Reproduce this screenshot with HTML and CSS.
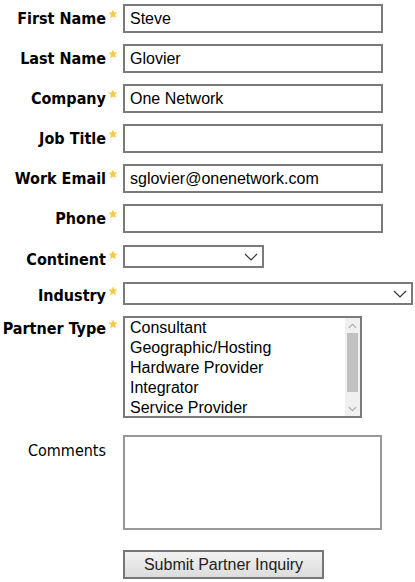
FILE: index.html
```html
<!DOCTYPE html>
<html lang="en">
<head>
    <meta charset="UTF-8">
    <meta name="viewport" content="width=device-width, initial-scale=1.0">
    <title>Partner Inquiry</title>
    <link rel="stylesheet" href="styles.css">
</head>
<body>
    <form class="inquiry-form" onsubmit="return false">
        <div class="row">
            <label class="lbl" for="firstName">First Name<span class="star"><svg viewBox="0 0 10 10"><polygon points="5,0.4 6.3,3.4 9.6,3.6 7.1,5.8 7.9,9.2 5,7.4 2.1,9.2 2.9,5.8 0.4,3.6 3.7,3.4"/></svg></span></label>
            <input type="text" id="firstName" class="field" value="Steve">
        </div>
        <div class="row">
            <label class="lbl" for="lastName">Last Name<span class="star"><svg viewBox="0 0 10 10"><polygon points="5,0.4 6.3,3.4 9.6,3.6 7.1,5.8 7.9,9.2 5,7.4 2.1,9.2 2.9,5.8 0.4,3.6 3.7,3.4"/></svg></span></label>
            <input type="text" id="lastName" class="field" value="Glovier">
        </div>
        <div class="row">
            <label class="lbl" for="company">Company<span class="star"><svg viewBox="0 0 10 10"><polygon points="5,0.4 6.3,3.4 9.6,3.6 7.1,5.8 7.9,9.2 5,7.4 2.1,9.2 2.9,5.8 0.4,3.6 3.7,3.4"/></svg></span></label>
            <input type="text" id="company" class="field" value="One Network">
        </div>
        <div class="row">
            <label class="lbl" for="jobTitle">Job Title<span class="star"><svg viewBox="0 0 10 10"><polygon points="5,0.4 6.3,3.4 9.6,3.6 7.1,5.8 7.9,9.2 5,7.4 2.1,9.2 2.9,5.8 0.4,3.6 3.7,3.4"/></svg></span></label>
            <input type="text" id="jobTitle" class="field">
        </div>
        <div class="row">
            <label class="lbl" for="workEmail">Work Email<span class="star"><svg viewBox="0 0 10 10"><polygon points="5,0.4 6.3,3.4 9.6,3.6 7.1,5.8 7.9,9.2 5,7.4 2.1,9.2 2.9,5.8 0.4,3.6 3.7,3.4"/></svg></span></label>
            <input type="email" id="workEmail" class="field" value="sglovier@onenetwork.com">
        </div>
        <div class="row row-phone">
            <label class="lbl" for="phone">Phone<span class="star"><svg viewBox="0 0 10 10"><polygon points="5,0.4 6.3,3.4 9.6,3.6 7.1,5.8 7.9,9.2 5,7.4 2.1,9.2 2.9,5.8 0.4,3.6 3.7,3.4"/></svg></span></label>
            <input type="tel" id="phone" class="field">
        </div>
        <div class="row row-select row-continent">
            <label class="lbl" for="continent">Continent<span class="star"><svg viewBox="0 0 10 10"><polygon points="5,0.4 6.3,3.4 9.6,3.6 7.1,5.8 7.9,9.2 5,7.4 2.1,9.2 2.9,5.8 0.4,3.6 3.7,3.4"/></svg></span></label>
            <select id="continent" class="dropdown dropdown-short">
                <option></option>
            </select>
        </div>
        <div class="row row-select row-industry">
            <label class="lbl" for="industry">Industry<span class="star"><svg viewBox="0 0 10 10"><polygon points="5,0.4 6.3,3.4 9.6,3.6 7.1,5.8 7.9,9.2 5,7.4 2.1,9.2 2.9,5.8 0.4,3.6 3.7,3.4"/></svg></span></label>
            <select id="industry" class="dropdown dropdown-wide">
                <option></option>
            </select>
        </div>
        <div class="row row-top row-partner">
            <label class="lbl lbl-top">Partner Type<span class="star"><svg viewBox="0 0 10 10"><polygon points="5,0.4 6.3,3.4 9.6,3.6 7.1,5.8 7.9,9.2 5,7.4 2.1,9.2 2.9,5.8 0.4,3.6 3.7,3.4"/></svg></span></label>
            <div class="listbox">
                <ul class="options">
                    <li>Consultant</li>
                    <li>Geographic/Hosting</li>
                    <li>Hardware Provider</li>
                    <li>Integrator</li>
                    <li>Service Provider</li>
                </ul>
                <div class="scrollbar">
                    <span class="arrow"><svg viewBox="0 0 10 6"><polyline points="1,5 5,1 9,5"/></svg></span>
                    <span class="track"><span class="thumb"></span></span>
                    <span class="arrow"><svg viewBox="0 0 10 6"><polyline points="1,1 5,5 9,1"/></svg></span>
                </div>
            </div>
        </div>
        <div class="row row-top row-comments">
            <label class="lbl lbl-plain" for="comments">Comments</label>
            <textarea id="comments" class="comments"></textarea>
        </div>
        <div class="row row-submit">
            <button type="submit" class="submit-btn">Submit Partner Inquiry</button>
        </div>
    </form>
</body>
</html>
```

FILE: styles.css
```css
body {
    margin: 0;
    padding: 0;
    background: #fff;
    font-family: 'DejaVu Sans Condensed', 'DejaVu Sans', sans-serif;
    color: #000;
}
.inquiry-form {
    padding-top: 4px;
}
.row {
    display: flex;
    align-items: center;
    margin: 0 0 11px 0;
}
.lbl {
    flex: none;
    width: 118px;
    margin-right: 5px;
    text-align: right;
    font-weight: bold;
    font-size: 16px;
    line-height: 20px;
    white-space: nowrap;
}
.star {
    display: inline-block;
    width: 10px;
    height: 10px;
    margin-left: 2px;
    vertical-align: top;
}
.star svg {
    display: block;
    width: 10px;
    height: 10px;
    fill: #f7c948;
}
.field {
    box-sizing: border-box;
    width: 260px;
    height: 29px;
    margin: 0;
    padding: 0 5px;
    border: 2px solid #7a7a7a;
    border-radius: 0;
    font-family: 'Liberation Sans', Arial, sans-serif;
    font-size: 16px;
    color: #000;
    background: #fff;
    outline: none;
}
.row-phone {
    margin-bottom: 12px;
}
.row-select {
    align-items: flex-start;
}
.row-select .lbl {
    margin-top: 4px;
}
.row-continent .lbl {
    margin-top: 5px;
}
.row-continent {
    margin-bottom: 12px;
}
.row-industry {
    margin-bottom: 10px;
}
.dropdown {
    box-sizing: border-box;
    height: 23px;
    margin: 0;
    padding: 0 24px 0 4px;
    border: 2px solid #7a7a7a;
    border-radius: 0;
    appearance: none;
    -webkit-appearance: none;
    background: #fff url("data:image/svg+xml,%3Csvg xmlns='http://www.w3.org/2000/svg' width='14' height='8' viewBox='0 0 14 8'%3E%3Cpolyline points='1,1 7,7 13,1' fill='none' stroke='%23333' stroke-width='1.2'/%3E%3C/svg%3E") no-repeat right 4px center;
    font-family: 'Liberation Sans', Arial, sans-serif;
    font-size: 16px;
}
.dropdown-short {
    width: 141px;
}
.dropdown-wide {
    width: 290px;
}
.row-top {
    align-items: flex-start;
}
.lbl-top {
    padding-top: 3px;
}
.lbl-plain {
    font-weight: normal;
    padding-right: 12px;
    width: 106px;
    padding-top: 6px;
}
.row-partner {
    margin-bottom: 17px;
}
.listbox {
    box-sizing: border-box;
    display: flex;
    width: 239px;
    height: 102px;
    border: 2px solid #7a7a7a;
    background: #fff;
}
.options {
    flex: 1;
    list-style: none;
    margin: 0;
    padding: 0 0 0 5px;
    font-family: 'Liberation Sans', Arial, sans-serif;
    font-size: 16px;
    line-height: 20px;
    color: #000;
}
.scrollbar {
    display: flex;
    flex-direction: column;
    width: 15px;
    background: #f0f0f0;
}
.arrow {
    display: flex;
    align-items: center;
    justify-content: center;
    height: 15px;
}
.arrow svg {
    width: 9px;
    height: 6px;
    fill: none;
    stroke: #a3a3a3;
    stroke-width: 1.2;
}
.track {
    flex: 1;
    display: flex;
    flex-direction: column;
    padding: 0 2px;
}
.thumb {
    height: 59px;
    background: #c1c1c1;
}
.row-comments {
    margin-bottom: 20px;
}
.comments {
    box-sizing: border-box;
    width: 259px;
    height: 95px;
    margin: 0;
    border: 2px solid #999;
    border-radius: 0;
    resize: none;
    outline: none;
}
.row-submit {
    padding-left: 123px;
}
.submit-btn {
    box-sizing: border-box;
    width: 201px;
    height: 29px;
    margin: 0;
    padding: 0;
    border: 2px solid #767676;
    border-radius: 0;
    background: linear-gradient(#f2f2f2, #dcdcdc);
    font-family: 'Liberation Sans', Arial, sans-serif;
    font-size: 16px;
    color: #222;
}
```
